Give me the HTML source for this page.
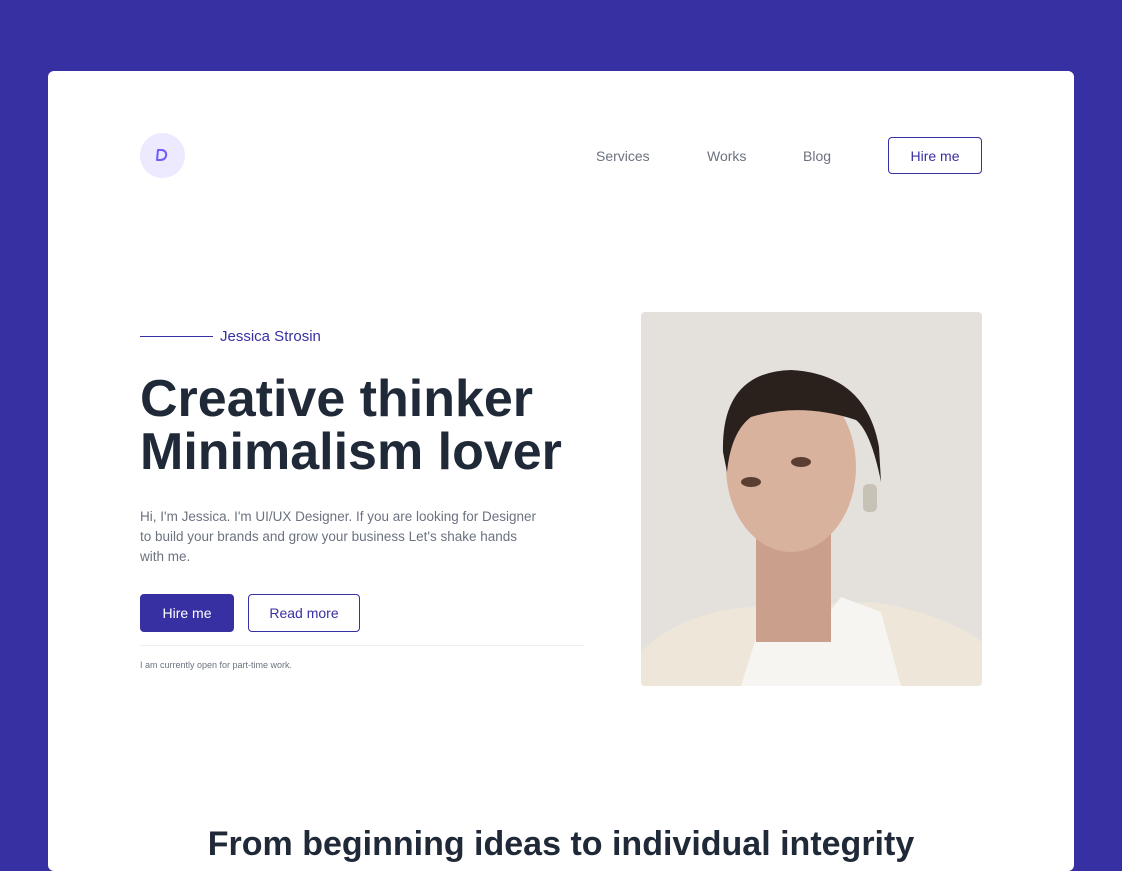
<!DOCTYPE html>
<html><head><meta charset="utf-8"><style>
*{margin:0;padding:0;box-sizing:border-box}
body{width:1122px;height:841px;overflow:hidden;background:#3730a3;font-family:"Liberation Sans",sans-serif;position:relative}
.card{position:absolute;left:48px;top:71px;width:1026px;height:800px;background:#fff;border-radius:6px;overflow:hidden}
.abs{position:absolute}
.nav a{position:absolute;top:77px;font-size:14px;color:#6b7280;text-decoration:none}
.btn{position:absolute;border-radius:4px;font-size:14px;display:flex;align-items:center;justify-content:center}
</style></head><body>
<div class="card">
 <div class="abs" style="left:92px;top:62px;width:45px;height:45px;border-radius:50%;background:#ede9fe"></div>
 <svg class="abs" style="left:106px;top:76px" width="16" height="16" viewBox="0 0 16 16"><path d="M4 3 L8 3 Q13 4 12 9 Q11 13 6 13 L3 13 Z" fill="none" stroke="#6d5dfc" stroke-width="2" stroke-linejoin="round"/></svg>
 <div class="nav"><a style="left:548px">Services</a><a style="left:659px">Works</a><a style="left:755px">Blog</a></div>
 <div class="btn" style="left:840px;top:66px;width:94px;height:37px;border:1px solid #3730a3;color:#3730a3">Hire me</div>
 <div class="abs" style="left:92px;top:265px;width:73px;height:1px;background:#3730a3"></div>
 <div class="abs" style="left:172px;top:257px;font-size:15px;color:#3730a3">Jessica Strosin</div>
 <div class="abs" style="left:92px;top:302px;font-size:52px;font-weight:700;color:#1f2937;line-height:53px;letter-spacing:0px">Creative thinker<br>Minimalism lover</div>
 <div class="abs" style="left:92px;top:436px;width:398px;font-size:13.5px;color:#6b7280;line-height:20px">Hi, I'm Jessica. I'm UI/UX Designer. If you are looking for Designer to build your brands and grow your business Let's shake hands with me.</div>
 <div class="btn" style="left:92px;top:523px;width:94px;height:38px;background:#3730a3;color:#fff">Hire me</div>
 <div class="btn" style="left:200px;top:523px;width:112px;height:38px;border:1px solid #3730a3;color:#3730a3">Read more</div>
 <div class="abs" style="left:92px;top:574px;width:444px;height:1px;background:#eceef1"></div>
 <div class="abs" style="left:92px;top:589px;font-size:9px;color:#6b7280">I am currently open for part-time work.</div>
 <svg class="abs" style="left:593px;top:241px;border-radius:4px" width="341" height="374" viewBox="0 0 341 374">
  <rect width="341" height="374" fill="#e4e1dd"/>
  <path d="M0 374 L0 340 Q40 300 110 295 L230 290 Q300 300 341 330 L341 374Z" fill="#eee6d8"/>
  <path d="M100 374 L120 310 L165 330 L200 285 L240 300 L260 374Z" fill="#f7f5f1"/>
  <rect x="115" y="200" width="75" height="130" fill="#caa08c"/>
  <ellipse cx="150" cy="155" rx="65" ry="85" fill="#d9b29e"/>
  <path d="M82 140 Q80 60 150 58 Q225 62 238 135 L240 170 Q230 120 215 108 Q160 90 110 105 Q90 120 86 160Z" fill="#2a211d"/>
  <ellipse cx="110" cy="170" rx="10" ry="5" fill="#5a3e32"/>
  <ellipse cx="160" cy="150" rx="10" ry="5" fill="#5a3e32"/>
  <rect x="222" y="172" width="14" height="28" rx="5" fill="#c8c2b6"/>
 </svg>
 <div class="abs" style="left:0;width:1026px;top:754px;text-align:center;font-size:34px;font-weight:700;color:#1f2937">From beginning ideas to individual integrity</div>
</div>
</body></html>
